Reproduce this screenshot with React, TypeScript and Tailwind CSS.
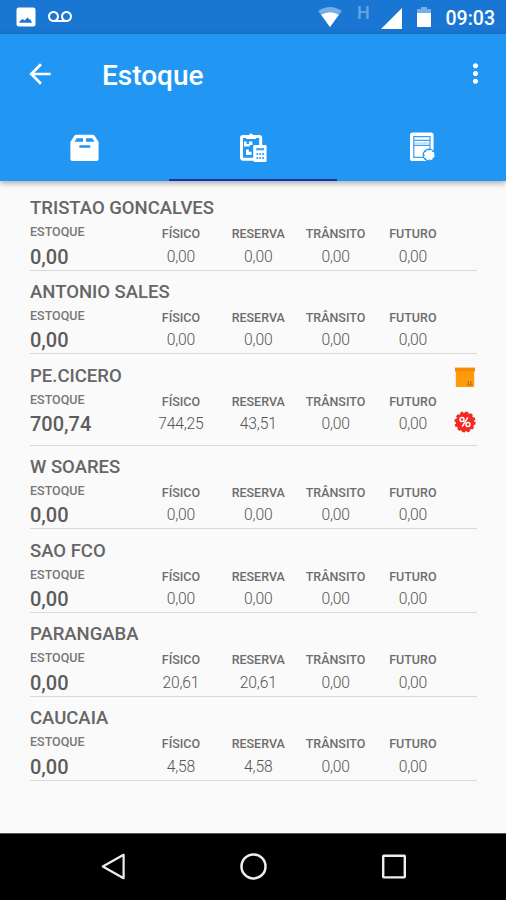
import React from 'react';
import { MdArrowBack, MdMoreVert, MdVoicemail } from 'react-icons/md';

interface Branch {
    name: string;
    estoque: string;
    fisico: string;
    reserva: string;
    transito: string;
    futuro: string;
    highlighted?: boolean;
}

const branches: Branch[] = [
    { name: 'TRISTAO GONCALVES', estoque: '0,00', fisico: '0,00', reserva: '0,00', transito: '0,00', futuro: '0,00' },
    { name: 'ANTONIO SALES', estoque: '0,00', fisico: '0,00', reserva: '0,00', transito: '0,00', futuro: '0,00' },
    { name: 'PE.CICERO', estoque: '700,74', fisico: '744,25', reserva: '43,51', transito: '0,00', futuro: '0,00', highlighted: true },
    { name: 'W SOARES', estoque: '0,00', fisico: '0,00', reserva: '0,00', transito: '0,00', futuro: '0,00' },
    { name: 'SAO FCO', estoque: '0,00', fisico: '0,00', reserva: '0,00', transito: '0,00', futuro: '0,00' },
    { name: 'PARANGABA', estoque: '0,00', fisico: '20,61', reserva: '20,61', transito: '0,00', futuro: '0,00' },
    { name: 'CAUCAIA', estoque: '0,00', fisico: '4,58', reserva: '4,58', transito: '0,00', futuro: '0,00' },
];

function StatusBar() {
    return (
        <div className="flex h-[34px] items-center bg-[#1976d2] pl-4 pr-[11px] text-white">
            <svg className="h-5 w-5" viewBox="0 0 20 20">
                <rect x="0.5" y="0.5" width="19" height="19" rx="2.2" fill="#fff" />
                <path d="M3.5 15.8 V14.6 L6.4 12 L8.7 13.6 L11.6 10.2 L13 12.6 L14.4 12.2 L16 15.8 Z" fill="#1976d2" />
            </svg>
            <MdVoicemail className="ml-3 h-6 w-6" />
            <div className="grow" />
            <svg className="h-5 w-6" viewBox="0 0 24 20">
                <path d="M0.2 4 Q12 -4 23.8 4 L12 20 Z" fill="#75ade4" />
                <path d="M3.2 7.8 Q12 2.8 20.8 7.8 L12 20 Z" fill="#fff" />
            </svg>
            <span className="ml-[15px] -mt-2 w-3 text-[18px] leading-5 font-medium text-[#67a5e2]">H</span>
            <svg className="ml-3 mt-0.5 h-[21px] w-[21px]" viewBox="0 0 21 21">
                <path d="M21 0 V21 H0 Z" fill="#fff" />
            </svg>
            <svg className="ml-[15px] h-5 w-[14px]" viewBox="0 0 14 20">
                <path d="M0 2 H4 V0 H10 V2 H14 V7 H0 Z" fill="#75ade4" />
                <rect y="6" width="14" height="14" rx="0.8" fill="#fff" />
            </svg>
            <span className="ml-[14px] mt-1 w-[50px] text-right text-[19.5px] leading-6 font-medium whitespace-nowrap">09:03</span>
        </div>
    );
}

function BoxTabIcon() {
    return (
        <svg className="h-7 w-[29px]" viewBox="0 0 29 28">
            <path d="M6.5 0.8 H22.5 Q24 0.8 24.8 2 L28.6 8 V25 Q28.6 27 26.6 27 H2.4 Q0.4 27 0.4 25 V8 L4.2 2 Q5 0.8 6.5 0.8 Z" fill="#fff" />
            <path d="M6.8 4.2 H13 V7.8 H4.4 Z M16 4.2 H22.2 L24.6 7.8 H16 Z" fill="#2196f3" />
            <rect x="9.3" y="11.2" width="11" height="2.6" rx="0.5" fill="#2196f3" />
        </svg>
    );
}

function InventoryTabIcon() {
    return (
        <svg className="h-[29px] w-7" viewBox="0 0 28 29">
            <rect x="2.5" y="3.4" width="19.2" height="22.8" rx="1.6" fill="none" stroke="#fff" strokeWidth="3" />
            <path d="M7 2 H10 Q12 -0.8 14 2 H17 V6 H7 Z" fill="#fff" />
            <path d="M5 8.4 H7.6 V11 H10 V8.4 H13.4 V12 H10.8 V13.4 H5 Z" fill="#fff" />
            <path d="M7 16.4 H9.8 V18.8 H12.6 V22 H7 Z" fill="#fff" />
            <rect x="14.2" y="12" width="13.4" height="17" rx="1.4" fill="#fff" />
            <path d="M17.2 15 H25 V17.4 H17.2 Z" fill="#4ba8f5" />
            <path d="M17.4 20 H19.2 V22 H17.4 Z M20.3 20 H22.1 V22 H20.3 Z M23.2 20 H25 V22 H23.2 Z M17.4 24 H19.2 V26 H17.4 Z M20.3 24 H22.1 V26 H20.3 Z M23.2 24 H25 V26 H23.2 Z" fill="#4ba8f5" />
        </svg>
    );
}

function CertificateTabIcon() {
    return (
        <svg className="h-[30px] w-[26px]" viewBox="0 0 26 30">
            <rect x="1" y="0.5" width="23.6" height="28.6" rx="2.6" fill="#fff" />
            <path d="M4.8 4.6 H21 V25.4 H4.8 Z M4.8 8.4 H21 M4.8 13.3 H21" fill="none" stroke="#3a9ff3" strokeWidth="1.2" />
            <path d="M5 11 H20.6" stroke="#8cc8f8" strokeWidth="1" />
            <circle cx="20" cy="23" r="6.4" fill="#2196f3" />
            <path d="M17.5 30 V26 H26 V30 Z" fill="#2196f3" />
            <circle cx="20.2" cy="23" r="4.6" fill="#fff" stroke="#fff" strokeWidth="1.6" strokeDasharray="2.4 1.21" />
        </svg>
    );
}

function Tabs() {
    return (
        <div className="grid h-[66px] grid-cols-3">
            <div className="flex items-center justify-center"><BoxTabIcon /></div>
            <div className="flex items-center justify-center border-b-2 border-[#1a33a5]"><InventoryTabIcon /></div>
            <div className="flex items-center justify-center pb-0.5"><CertificateTabIcon /></div>
        </div>
    );
}

function PackageIcon() {
    return (
        <svg className="h-5 w-5" viewBox="0 0 20 20">
            <rect x="0.8" y="1" width="18.4" height="19" rx="0.8" fill="#ff9b0b" />
            <path d="M0 0.6 H20 V4.4 H0 Z" fill="#f68a08" />
            <path d="M13.4 14 V17.6 M15.8 14 V17.6 M12.2 18 H17.4" stroke="#b8720e" strokeWidth="1.2" />
        </svg>
    );
}

function DiscountIcon() {
    return (
        <svg className="h-[22px] w-[22px]" viewBox="0 0 22 22">
            <circle cx="11" cy="11" r="9.4" fill="#f32c23" />
            <circle cx="11" cy="11" r="9.4" fill="none" stroke="#f32c23" strokeWidth="2.4" strokeDasharray="2.8 2.12" />
            <g fill="none" stroke="#fff" strokeWidth="1.5">
                <circle cx="8" cy="8.6" r="2" />
                <circle cx="14" cy="13.4" r="2" />
                <path d="M13.8 6.4 L8.2 15.6" />
            </g>
        </svg>
    );
}

function Amount({ label, value }: { label: string; value: string }) {
    return (
        <div className="flex flex-col items-center whitespace-nowrap">
            <span className="text-[12.5px] leading-[27.4px] font-medium text-[#6d6d6d]">{label}</span>
            <span className="text-[15.7px] leading-[18px] font-light tracking-[-0.2px] text-[#555]">{value}</span>
        </div>
    );
}

function BranchRow({ branch }: { branch: Branch }) {
    return (
        <div className={`flex border-b border-[#d9d9d9] pt-[9.3px] ${branch.highlighted ? 'h-[91.4px]' : 'h-[83.7px]'}`}>
            <div className="grow">
                <h2 className="text-[18.5px] leading-6 font-medium text-[#666]">{branch.name}</h2>
                <div className="flex">
                    <div className="flex w-[112.3px] flex-col">
                        <span className="text-[12.5px] leading-[24.4px] font-medium text-[#777]">ESTOQUE</span>
                        <span className="text-[20px] leading-[25px] font-medium text-[#5c5c5c]">{branch.estoque}</span>
                    </div>
                    <div className="grid w-[309.2px] grid-cols-4">
                        <Amount label="FÍSICO" value={branch.fisico} />
                        <Amount label="RESERVA" value={branch.reserva} />
                        <Amount label="TRÂNSITO" value={branch.transito} />
                        <Amount label="FUTURO" value={branch.futuro} />
                    </div>
                </div>
            </div>
            {branch.highlighted && (
                <div className="flex w-[25px] shrink-0 flex-col items-center gap-[24px] pt-[3.5px]">
                    <PackageIcon />
                    <DiscountIcon />
                </div>
            )}
        </div>
    );
}

function NavigationBar() {
    return (
        <div className="flex h-[67px] items-center justify-between border-t border-[#555] bg-black pr-[98px] pl-[100px]">
            <svg className="h-7 w-7" viewBox="0 0 28 28" fill="none" stroke="#eee" strokeWidth="2.2" strokeLinejoin="round">
                <path d="M2.8 13.5 L23.6 1.8 V25.2 Z" />
            </svg>
            <svg className="h-7 w-7" viewBox="0 0 28 28" fill="none" stroke="#eee" strokeWidth="2.5">
                <circle cx="13.5" cy="13.4" r="12" />
            </svg>
            <svg className="h-7 w-7" viewBox="0 0 28 28" fill="none" stroke="#eee" strokeWidth="2.4">
                <rect x="3.2" y="2.8" width="21.6" height="21.6" rx="0.6" />
            </svg>
        </div>
    );
}

export default function App() {
    return (
        <div className="flex h-[900px] w-[506px] flex-col overflow-hidden bg-[#fafafa] font-[Roboto,sans-serif]">
            <StatusBar />

            {/* App bar */}
            <header className="bg-[#2196f3] text-white shadow-[0_2px_6px_rgba(0,0,0,0.35)]">
                <div className="flex h-[81px] items-center pr-[15px] pl-[24px]">
                    <MdArrowBack className="-mt-0.5 h-[32px] w-[32px]" />
                    <h1 className="ml-[46px] mt-0.5 grow text-[28px] leading-8 font-medium">Estoque</h1>
                    <MdMoreVert className="-mt-0.5 h-[31px] w-[31px]" />
                </div>
                <Tabs />
            </header>

            {/* Stock by branch */}
            <main className="grow pt-[6px] pr-[29px] pl-[30px]">
                {branches.map((branch) => (
                    <BranchRow key={branch.name} branch={branch} />
                ))}
            </main>

            <NavigationBar />
        </div>
    );
}
